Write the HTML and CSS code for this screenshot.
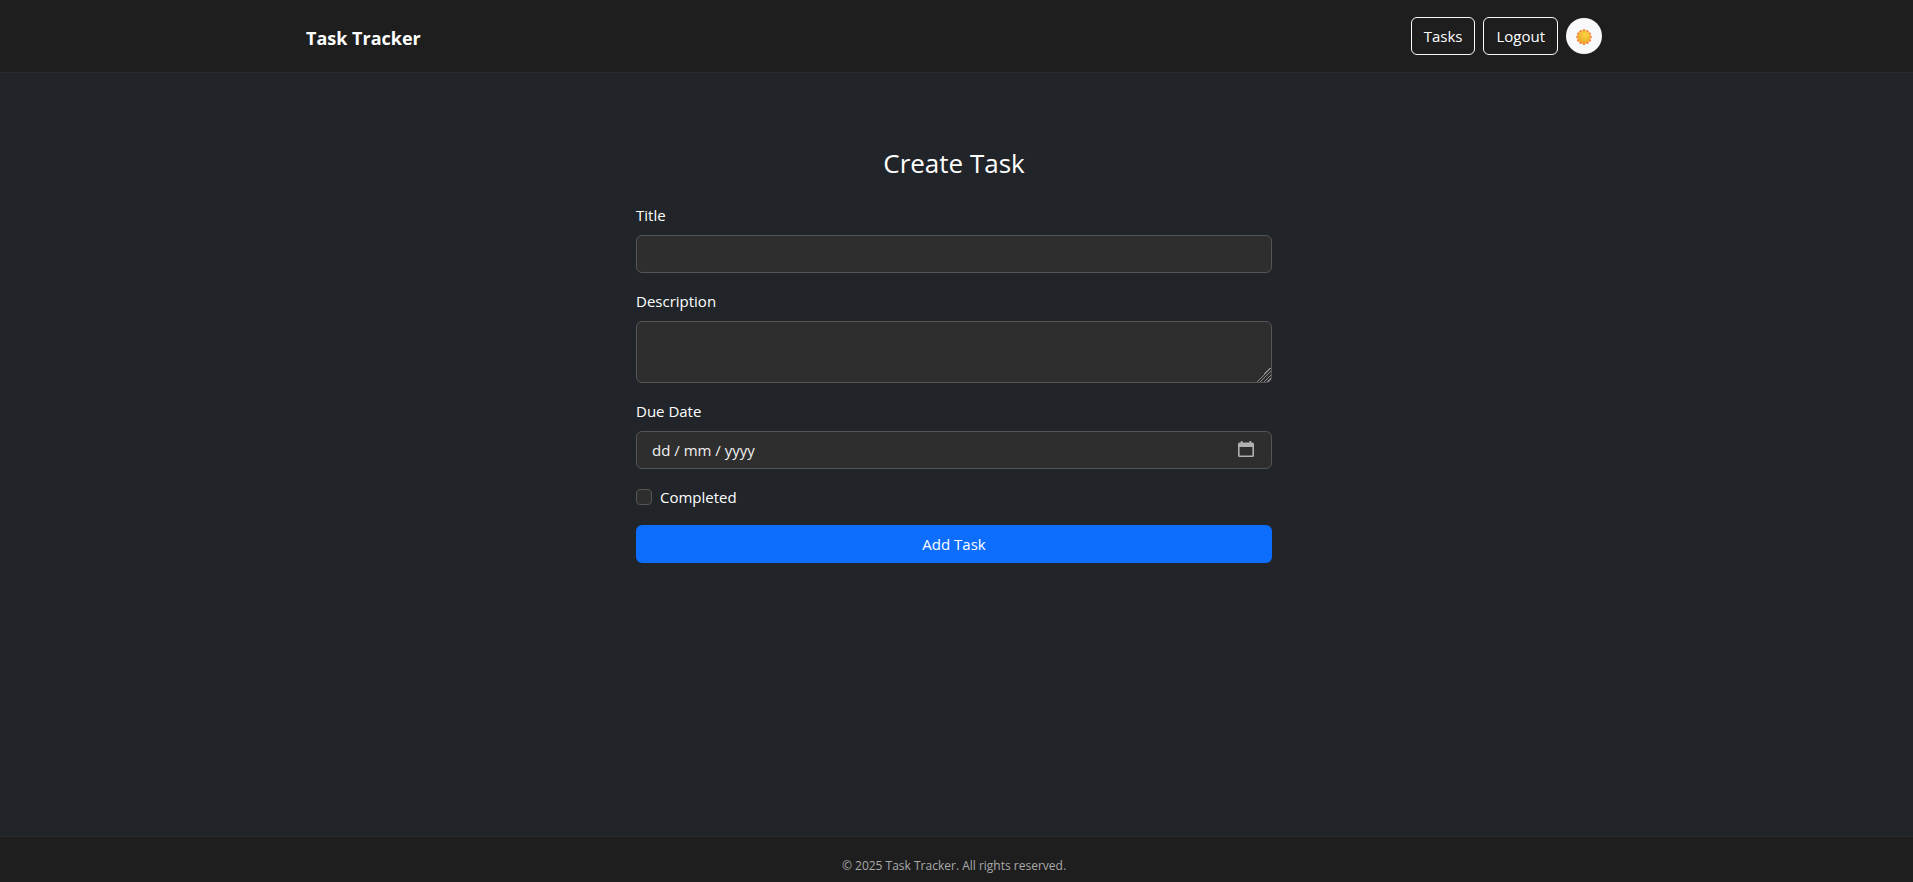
FILE: index.html
```html
<!DOCTYPE html>
<html lang="en">
<head>
<meta charset="utf-8">
<title>Create Task - Task Tracker</title>
<link rel="stylesheet" href="styles.css">
</head>
<body>
<header class="navbar">
  <div class="container">
    <a class="brand" href="#">Task Tracker</a>
    <nav class="actions">
      <a class="btn btn-outline" href="#">Tasks</a>
      <button class="btn btn-outline" type="button">Logout</button>
      <button class="theme-toggle" type="button" aria-label="Switch theme">
        <svg class="sun" viewBox="0 0 16 16" aria-hidden="true">
          <defs>
            <radialGradient id="sun-fill" cx="0.6" cy="0.3" r="0.75">
              <stop offset="0" stop-color="#fcd53f"/>
              <stop offset="1" stop-color="#e9a52b"/>
            </radialGradient>
          </defs>
          <g fill="#f6863a">
            <circle cx="8" cy="1.6" r="1.5"/><circle cx="11.2" cy="2.5" r="1.5"/><circle cx="13.5" cy="4.8" r="1.5"/>
            <circle cx="14.4" cy="8" r="1.5"/><circle cx="13.5" cy="11.2" r="1.5"/><circle cx="11.2" cy="13.5" r="1.5"/>
            <circle cx="8" cy="14.4" r="1.5"/><circle cx="4.8" cy="13.5" r="1.5"/><circle cx="2.5" cy="11.2" r="1.5"/>
            <circle cx="1.6" cy="8" r="1.5"/><circle cx="2.5" cy="4.8" r="1.5"/><circle cx="4.8" cy="2.5" r="1.5"/>
          </g>
          <circle cx="8" cy="8" r="6.2" fill="url(#sun-fill)"/>
        </svg>
      </button>
    </nav>
  </div>
</header>
<main class="main">
  <form class="task-form">
    <h1 class="form-title">Create Task</h1>
    <div class="field">
      <label class="label" for="title">Title</label>
      <input class="control" id="title" type="text">
    </div>
    <div class="field">
      <label class="label" for="description">Description</label>
      <textarea class="control" id="description" rows="2"></textarea>
    </div>
    <div class="field">
      <label class="label" for="due">Due Date</label>
      <div class="date-box">
        <input class="control" id="due" type="text" placeholder="dd / mm / yyyy">
        <svg class="calendar" viewBox="0 0 16 16" aria-hidden="true">
          <path fill="#b0b0b0" fill-rule="evenodd" d="M2.800 0h1.700v1.500h7V0h1.700v1.500h1.300q1.500 0 1.500 1.500v11.500q0 1.500-1.500 1.500h-13q-1.500 0-1.500-1.500V3q0-1.500 1.500-1.500h1.300zM1.600 6v7.900q0 .5.5.5h11.800q.5 0 .5-.5V6z"/>
        </svg>
      </div>
    </div>
    <div class="check">
      <input class="checkbox" id="completed" type="checkbox">
      <label for="completed">Completed</label>
    </div>
    <button class="btn btn-primary" type="submit">Add Task</button>
  </form>
</main>
<footer class="footer">© 2025 Task Tracker. All rights reserved.</footer>
</body>
</html>
```
FILE: styles.css
```css
*, *::before, *::after { box-sizing: border-box; }

body {
  display: flex;
  flex-direction: column;
  min-height: 100vh;
  margin: 0;
  background: #212529;
  color: #fff;
  font: 15px/24px "Open Sans", "Noto Sans", sans-serif;
}

.navbar {
  padding: 16px 5px 16px 0;
  background: #1e1e1e;
  border-bottom: 1px solid #2a2a2a;
}

.container {
  display: flex;
  align-items: center;
  justify-content: space-between;
  max-width: 1320px;
  margin: 0 auto;
  padding: 0 12px;
}

.brand {
  padding-top: 4px;
  color: #fff;
  font-size: 18px;
  font-weight: 700;
  line-height: 36px;
  text-decoration: none;
}

.actions { display: flex; align-items: center; gap: 8px; }

.btn {
  padding: 6px 12px;
  border: 1px solid transparent;
  border-radius: 6px;
  color: #fff;
  font: inherit;
  text-align: center;
  text-decoration: none;
  cursor: pointer;
}

.btn-outline { background: transparent; border-color: #f8f9fa; }

.theme-toggle {
  display: flex;
  align-items: center;
  justify-content: center;
  width: 36px;
  height: 36px;
  padding: 2px 0 0;
  border: 0;
  border-radius: 50%;
  background: #f8f9fa;
  cursor: pointer;
}

.sun { width: 16px; height: 16px; }

.main { flex: 1; padding: 72px 17px 48px 12px; }

.task-form { max-width: 636px; margin: 0 auto; }

.form-title {
  margin: 0 0 22px;
  font-size: 26px;
  font-weight: 400;
  line-height: 36px;
  text-align: center;
}

.field { margin-bottom: 16px; }

.label { display: block; margin-bottom: 8px; }

.control {
  display: block;
  width: 100%;
  padding: 6px 15px;
  border: 1px solid #555;
  border-radius: 6px;
  background: #2e2e2e;
  color: #fff;
  font: inherit;
}

.control::placeholder { color: #f1f1f1; opacity: 1; }

textarea.control { min-height: 62px; }

textarea.control::-webkit-resizer {
  background: linear-gradient(135deg, transparent 50%, #888 50% 54%, transparent 54% 62%, #888 62% 66%, transparent 66% 74%, #888 74% 78%, transparent 78% 86%, #888 86% 90%, transparent 90%);
}

.date-box { position: relative; }

.calendar {
  position: absolute;
  top: 10px;
  right: 18px;
  width: 16px;
  height: 16px;
}

.check { display: flex; align-items: center; gap: 8px; margin-bottom: 16px; }

.checkbox {
  width: 16px;
  height: 16px;
  margin: 0;
  appearance: none;
  border: 1px solid #555;
  border-radius: 4px;
  background: #2e2e2e;
}

.checkbox:checked { background: #0d6efd; }

.btn-primary { display: block; width: 100%; background: #0d6efd; }

.footer {
  padding: 17px 5px 4px 0;
  background: #1e1e1e;
  border-top: 1px solid #2a2a2a;
  color: #aaa;
  font-size: 12px;
  text-align: center;
}
```
